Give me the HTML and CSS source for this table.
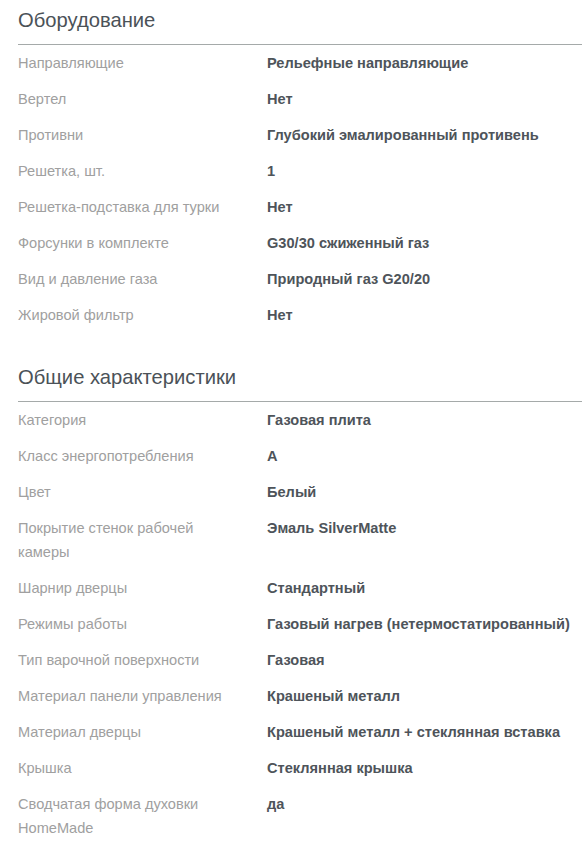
FILE: index.html
```html
<!DOCTYPE html>
<html lang="ru">
<head>
<meta charset="utf-8">
<title>Характеристики</title>
<link rel="stylesheet" href="styles.css">
</head>
<body>
<div class="specs">
  <section class="group">
    <h2 class="group-title">Оборудование</h2>
    <dl class="rows">
      <div class="row"><dt>Направляющие</dt><dd>Рельефные направляющие</dd></div>
      <div class="row"><dt>Вертел</dt><dd>Нет</dd></div>
      <div class="row"><dt>Противни</dt><dd>Глубокий эмалированный противень</dd></div>
      <div class="row"><dt>Решетка, шт.</dt><dd>1</dd></div>
      <div class="row"><dt>Решетка-подставка для турки</dt><dd>Нет</dd></div>
      <div class="row"><dt>Форсунки в комплекте</dt><dd>G30/30 сжиженный газ</dd></div>
      <div class="row"><dt>Вид и давление газа</dt><dd>Природный газ G20/20</dd></div>
      <div class="row"><dt>Жировой фильтр</dt><dd>Нет</dd></div>
    </dl>
  </section>
  <section class="group">
    <h2 class="group-title">Общие характеристики</h2>
    <dl class="rows">
      <div class="row"><dt>Категория</dt><dd>Газовая плита</dd></div>
      <div class="row"><dt>Класс энергопотребления</dt><dd>A</dd></div>
      <div class="row"><dt>Цвет</dt><dd>Белый</dd></div>
      <div class="row"><dt>Покрытие стенок рабочей камеры</dt><dd>Эмаль SilverMatte</dd></div>
      <div class="row"><dt>Шарнир дверцы</dt><dd>Стандартный</dd></div>
      <div class="row"><dt>Режимы работы</dt><dd>Газовый нагрев (нетермостатированный)</dd></div>
      <div class="row"><dt>Тип варочной поверхности</dt><dd>Газовая</dd></div>
      <div class="row"><dt>Материал панели управления</dt><dd>Крашеный металл</dd></div>
      <div class="row"><dt>Материал дверцы</dt><dd>Крашеный металл + стеклянная вставка</dd></div>
      <div class="row"><dt>Крышка</dt><dd>Стеклянная крышка</dd></div>
      <div class="row"><dt>Сводчатая форма духовки HomeMade</dt><dd>да</dd></div>
    </dl>
  </section>
</div>
</body>
</html>
```
FILE: styles.css
```css
html, body {
  margin: 0;
  padding: 0;
  background: #ffffff;
}
body {
  font-family: "Liberation Sans", Arial, sans-serif;
}
.specs {
  padding: 0 0 18px 18px;
  display: flex;
  flex-direction: column;
  gap: 24px;
}
.group-title {
  margin: 0;
  padding: 6px 0 10px;
  font-size: 20.2px;
  line-height: 28px;
  font-weight: normal;
  color: #4b5258;
  border-bottom: 1px solid #a5aaa9;
}
.rows {
  margin: 0;
  padding: 0;
}
.row {
  display: grid;
  grid-template-columns: 249px 1fr;
  padding: 6px 0;
  font-size: 14.6px;
  line-height: 24px;
}
.row dt {
  margin: 0;
  padding-right: 24px;
  color: #a0a0a0;
}
.row dd {
  margin: 0;
  font-weight: bold;
  color: #4e545a;
}
```
